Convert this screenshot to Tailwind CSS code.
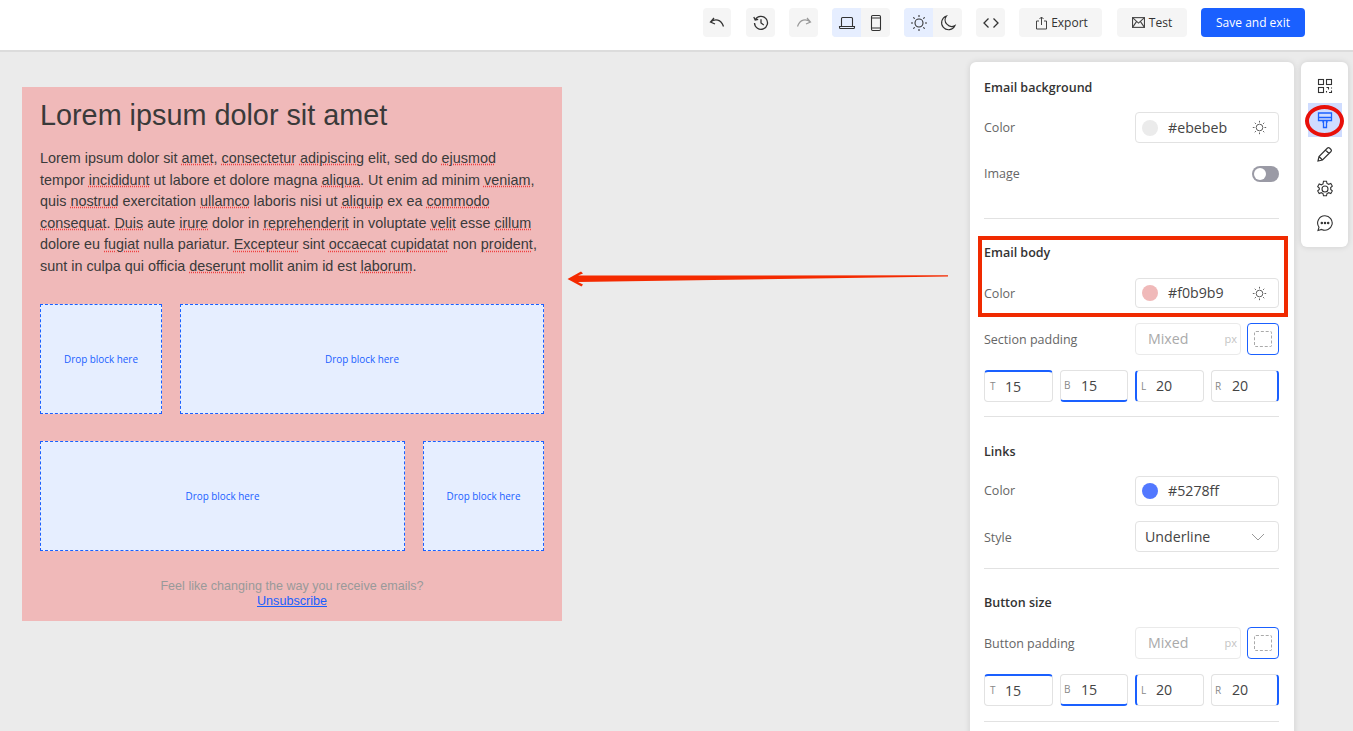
<!DOCTYPE html>
<html lang="en">
<head>
  <meta charset="UTF-8">
  <title>Email editor</title>
  <script src="https://cdn.jsdelivr.net/npm/@tailwindcss/browser@4"></script>
</head>
<body class="h-[731px] overflow-hidden bg-[#ebebeb] font-['Open_Sans',sans-serif] text-[#333]">
  <!-- top bar -->
  <header class="h-[52px] bg-white border-b-2 border-[#dcdcdc] flex items-start justify-end pt-2 pr-[48px]">
    <button class="w-[28px] h-[29px] rounded-[4px] bg-[#f5f5f5] flex items-center justify-center">
      <svg class="w-[18px] h-[18px]" viewBox="0 0 18 18" fill="none" stroke="#333" stroke-width="1.3"><path d="M6 4L2.500 8l4.500 2M2.500 8C7 4.500 13 5 15.500 12.500"/></svg>
    </button>
    <button class="ml-[15px] w-[29px] h-[29px] rounded-[4px] bg-[#f5f5f5] flex items-center justify-center">
      <svg class="w-[18px] h-[18px]" viewBox="0 0 18 18" fill="none" stroke="#333" stroke-width="1.3"><path d="M3.400 5.500A6.500 6.500 0 1 1 2.500 9M1.800 3l1.400 3 3-.7M9 5.200V9l2.800 2"/></svg>
    </button>
    <button class="ml-[14px] w-[29px] h-[29px] rounded-[4px] bg-[#f5f5f5] flex items-center justify-center">
      <svg class="w-[18px] h-[18px]" viewBox="0 0 18 18" fill="none" stroke="#999" stroke-width="1.2"><path d="M12 4l3.500 4-4.500 2M15.500 8C11 4.500 5 5 2.500 12.500"/></svg>
    </button>
    <div class="ml-[14px] flex h-[29px] rounded-[4px] overflow-hidden bg-[#f5f5f5]">
      <button class="w-[29px] bg-[#e6eeff] flex items-center justify-center">
        <svg class="w-[18px] h-[18px]" viewBox="0 0 18 18" fill="none" stroke="#333" stroke-width="1.1"><path d="M3.500 12.500V4.500a1 1 0 0 1 1-1h9a1 1 0 0 1 1 1v8M1.500 12.500h15v1a1 1 0 0 1-1 1h-13a1 1 0 0 1-1-1z"/></svg>
      </button>
      <button class="w-[29px] flex items-center justify-center">
        <svg class="w-[18px] h-[18px]" viewBox="0 0 18 18" fill="none" stroke="#333" stroke-width="1.1"><rect x="4.500" y="1.500" width="9" height="15" rx="1.2"/><path d="M4.500 4h9M4.500 14h9"/></svg>
      </button>
    </div>
    <div class="ml-[14px] flex h-[29px] rounded-[4px] overflow-hidden bg-[#f5f5f5]">
      <button class="w-[29px] bg-[#e6eeff] flex items-center justify-center">
        <svg class="w-[18px] h-[18px]" viewBox="0 0 18 18" fill="none" stroke="#333" stroke-width="1.1"><circle cx="9" cy="9" r="4"/><path d="M9 1v2M9 15v2M1 9h2M15 9h2M3.300 3.300l1.400 1.400M13.300 13.300l1.400 1.400M3.300 14.700l1.400-1.400M13.300 4.700l1.400-1.400"/></svg>
      </button>
      <button class="w-[29px] flex items-center justify-center">
        <svg class="w-[18px] h-[18px]" viewBox="0 0 18 18" fill="none" stroke="#333" stroke-width="1.1"><path d="M7.500 2a7 7 0 1 0 8.500 9.500A6.500 6.500 0 0 1 7.500 2z"/></svg>
      </button>
    </div>
    <button class="ml-[14px] w-[29px] h-[29px] rounded-[4px] bg-[#f5f5f5] flex items-center justify-center">
      <svg class="w-[18px] h-[18px]" viewBox="0 0 18 18" fill="none" stroke="#333" stroke-width="1.3"><path d="M6.500 4.500L2 9l4.500 4.500M11.500 4.500L16 9l-4.500 4.500"/></svg>
    </button>
    <button class="ml-[14px] w-[83px] h-[29px] rounded-[4px] bg-[#f5f5f5] flex items-center justify-center gap-[3px] pl-[2px] text-[12px] font-medium text-[#333]">
      <svg class="w-[13px] h-[14px]" viewBox="0 0 13 14" fill="none" stroke="#444" stroke-width="1"><path d="M4 5H1.500v8h10V5H9M6.500 9V1M4.500 3l2-2 2 2"/></svg>
      Export
    </button>
    <button class="ml-[15px] w-[70px] h-[29px] rounded-[4px] bg-[#f5f5f5] flex items-center justify-center gap-[4px] text-[12px] font-medium text-[#333]">
      <svg class="w-[13px] h-[11px]" viewBox="0 0 12 10" fill="none" stroke="#444" stroke-width="1"><rect x=".5" y=".5" width="11" height="9"/><path d="M.5.500L6 5.500l5.500-5M.5 9.500L4.300 4M11.500 9.500L7.700 4"/></svg>
      Test
    </button>
    <button class="ml-[14px] w-[104px] h-[29px] rounded-[4px] bg-[#1a60ff] text-white text-[12px] font-medium">Save and exit</button>
  </header>

  <main class="relative flex items-start h-[679px] overflow-hidden">
    <!-- email preview -->
    <section class="ml-[22px] mt-[35px] w-[540px] h-[534px] bg-[#f0b9b9] pl-[18px] pr-[18px] pt-[11px] font-['Liberation_Sans',sans-serif] text-[#3a3a3a]">
      <h1 class="text-[28.8px] leading-[34px]">Lorem ipsum dolor sit amet</h1>
      <p class="mt-[16px] text-[14.4px] leading-[21.6px] whitespace-nowrap">
        Lorem ipsum dolor sit <span class="underline decoration-dotted decoration-[#ee4040]">amet</span>, <span class="underline decoration-dotted decoration-[#ee4040]">consectetur</span> <span class="underline decoration-dotted decoration-[#ee4040]">adipiscing</span> elit, sed do <span class="underline decoration-dotted decoration-[#ee4040]">ejusmod</span><br>
        tempor <span class="underline decoration-dotted decoration-[#ee4040]">incididunt</span> ut labore et dolore magna <span class="underline decoration-dotted decoration-[#ee4040]">aliqua</span>. Ut enim ad minim <span class="underline decoration-dotted decoration-[#ee4040]">veniam</span>,<br>
        quis <span class="underline decoration-dotted decoration-[#ee4040]">nostrud</span> exercitation <span class="underline decoration-dotted decoration-[#ee4040]">ullamco</span> laboris nisi ut <span class="underline decoration-dotted decoration-[#ee4040]">aliquip</span> ex ea <span class="underline decoration-dotted decoration-[#ee4040]">commodo</span><br>
        <span class="underline decoration-dotted decoration-[#ee4040]">consequat</span>. <span class="underline decoration-dotted decoration-[#ee4040]">Duis</span> aute <span class="underline decoration-dotted decoration-[#ee4040]">irure</span> dolor in <span class="underline decoration-dotted decoration-[#ee4040]">reprehenderit</span> in voluptate <span class="underline decoration-dotted decoration-[#ee4040]">velit</span> esse <span class="underline decoration-dotted decoration-[#ee4040]">cillum</span><br>
        dolore eu <span class="underline decoration-dotted decoration-[#ee4040]">fugiat</span> nulla pariatur. <span class="underline decoration-dotted decoration-[#ee4040]">Excepteur</span> sint <span class="underline decoration-dotted decoration-[#ee4040]">occaecat</span> <span class="underline decoration-dotted decoration-[#ee4040]">cupidatat</span> non <span class="underline decoration-dotted decoration-[#ee4040]">proident</span>,<br>
        sunt in culpa qui officia <span class="underline decoration-dotted decoration-[#ee4040]">deserunt</span> mollit anim id est <span class="underline decoration-dotted decoration-[#ee4040]">laborum</span>.
      </p>
      <div class="mt-[26px] flex gap-[18px] h-[110px] font-['Open_Sans',sans-serif] text-[9.9px] text-[#1a60ff]">
        <div class="w-[122px] pt-[2px] border border-dashed border-[#1a60ff] bg-[#e6eeff] flex items-center justify-center">Drop block here</div>
        <div class="w-[364px] pt-[2px] border border-dashed border-[#1a60ff] bg-[#e6eeff] flex items-center justify-center">Drop block here</div>
      </div>
      <div class="mt-[27px] flex gap-[18px] h-[110px] font-['Open_Sans',sans-serif] text-[9.9px] text-[#1a60ff]">
        <div class="w-[365px] pt-[2px] border border-dashed border-[#1a60ff] bg-[#e6eeff] flex items-center justify-center">Drop block here</div>
        <div class="w-[121px] pt-[2px] border border-dashed border-[#1a60ff] bg-[#e6eeff] flex items-center justify-center">Drop block here</div>
      </div>
      <div class="mt-[28px] text-center text-[12.6px] leading-[15px] text-[#999]">
        <p>Feel like changing the way you receive emails?</p>
        <a class="text-[#1a60ff] underline">Unsubscribe</a>
      </div>
    </section>

    <!-- settings panel -->
    <aside class="absolute left-[970px] top-[10px] w-[324px] h-[680px] bg-white rounded-t-[6px] shadow-[0_0_6px_rgba(0,0,0,0.12)] pl-[14px] pr-[15px] pt-[17px] text-[12.5px] text-[#666]">
      <h2 class="font-semibold text-[#333] leading-[17px]">Email background</h2>
      <div class="mt-[16px] flex items-center justify-between">
        <span class="pt-[2px]">Color</span>
        <div class="w-[144px] h-[31px] border border-[#e2e2e2] rounded-[4px] flex items-center pl-[6px] pr-[11px] text-[14.2px] text-[#444]">
          <span class="w-[16px] h-[16px] rounded-full bg-[#ebebeb]"></span>
          <span class="ml-[10px] flex-1">#ebebeb</span>
          <svg class="w-[15px] h-[15px]" viewBox="0 0 18 18" fill="none" stroke="#444" stroke-width="1"><circle cx="9" cy="9" r="4"/><path d="M9 1v2M9 15v2M1 9h2M15 9h2M3.300 3.300l1.400 1.400M13.300 13.300l1.400 1.400M3.300 14.700l1.400-1.400M13.300 4.700l1.400-1.400"/></svg>
        </div>
      </div>
      <div class="mt-[23px] flex items-center justify-between h-[16px]">
        <span>Image</span>
        <span class="w-[27px] h-[16px] rounded-full bg-[#9a9aa5] flex items-center pl-[2px]"><span class="w-[12px] h-[12px] rounded-full bg-white"></span></span>
      </div>
      <hr class="mt-[36px] border-[#e2e2e2]">

      <h2 class="mt-[25px] font-semibold text-[#333] leading-[17px]">Email body</h2>
      <div class="mt-[17px] flex items-center justify-between">
        <span class="pt-[2px]">Color</span>
        <div class="w-[144px] h-[30px] border border-[#e2e2e2] rounded-[4px] flex items-center pl-[6px] pr-[11px] text-[14.2px] text-[#444]">
          <span class="w-[16px] h-[16px] rounded-full bg-[#f0b9b9]"></span>
          <span class="ml-[10px] flex-1">#f0b9b9</span>
          <svg class="w-[15px] h-[15px]" viewBox="0 0 18 18" fill="none" stroke="#444" stroke-width="1"><circle cx="9" cy="9" r="4"/><path d="M9 1v2M9 15v2M1 9h2M15 9h2M3.300 3.300l1.400 1.400M13.300 13.300l1.400 1.400M3.300 14.700l1.400-1.400M13.300 4.700l1.400-1.400"/></svg>
        </div>
      </div>
      <div class="mt-[15px] flex items-center h-[32px]">
        <span class="flex-1 pt-[2px]">Section padding</span>
        <div class="w-[106px] h-[32px] border border-[#eaeaea] rounded-[4px] flex items-center justify-between pl-[12px] pr-[3px] text-[14.2px] text-[#aaa]">Mixed <span class="text-[11px] text-[#c4c4c4]">px</span></div>
        <div class="ml-[6px] w-[32px] h-[32px] border border-[#1a60ff] rounded-[4px] flex items-center justify-center"><span class="w-[18px] h-[16px] border border-dashed border-[#aaa] rounded-[2px]"></span></div>
      </div>
      <div class="mt-[15px] flex justify-between text-[14.2px] text-[#444]">
        <div class="w-[69px] h-[32px] border border-[#e2e2e2] border-t-2 border-t-[#1a60ff] rounded-[4px] flex items-center pl-[5px]"><span class="w-[14px] text-[10px] text-[#888]">T</span><span class="ml-[1px]">15</span></div>
        <div class="w-[68px] h-[32px] border border-[#e2e2e2] border-b-2 border-b-[#1a60ff] rounded-[4px] flex items-center pl-[3px]"><span class="w-[14px] text-[10px] text-[#888]">B</span><span class="ml-[3px]">15</span></div>
        <div class="w-[69px] h-[32px] border border-[#e2e2e2] border-l-2 border-l-[#1a60ff] rounded-[4px] flex items-center pl-[4px]"><span class="w-[14px] text-[10px] text-[#888]">L</span><span class="ml-[1px]">20</span></div>
        <div class="w-[68px] h-[32px] border border-[#e2e2e2] border-r-2 border-r-[#1a60ff] rounded-[4px] flex items-center pl-[3px]"><span class="w-[14px] text-[10px] text-[#888]">R</span><span class="ml-[3px]">20</span></div>
      </div>
      <hr class="mt-[14px] border-[#e2e2e2]">

      <h2 class="mt-[26px] font-semibold text-[#333] leading-[17px]">Links</h2>
      <div class="mt-[16px] flex items-center justify-between">
        <span>Color</span>
        <div class="w-[144px] h-[30px] border border-[#e2e2e2] rounded-[4px] flex items-center pl-[6px] text-[14.2px] text-[#444]">
          <span class="w-[16px] h-[16px] rounded-full bg-[#5278ff]"></span>
          <span class="ml-[10px]">#5278ff</span>
        </div>
      </div>
      <div class="mt-[15px] flex items-center justify-between">
        <span class="pt-[3px]">Style</span>
        <div class="w-[144px] h-[31px] border border-[#e2e2e2] rounded-[4px] flex items-center justify-between pl-[9px] pr-[13px] text-[14.2px] text-[#444]">
          Underline
          <svg class="w-[14px] h-[8px]" viewBox="0 0 14 8" fill="none" stroke="#999" stroke-width="1"><path d="M1 1l6 6 6-6"/></svg>
        </div>
      </div>
      <hr class="mt-[16px] border-[#e2e2e2]">

      <h2 class="mt-[25px] font-semibold text-[#333] leading-[17px]">Button size</h2>
      <div class="mt-[16px] flex items-center h-[32px]">
        <span class="flex-1 pt-[2px]">Button padding</span>
        <div class="w-[106px] h-[32px] border border-[#eaeaea] rounded-[4px] flex items-center justify-between pl-[12px] pr-[3px] text-[14.2px] text-[#aaa]">Mixed <span class="text-[11px] text-[#c4c4c4]">px</span></div>
        <div class="ml-[6px] w-[32px] h-[32px] border border-[#1a60ff] rounded-[4px] flex items-center justify-center"><span class="w-[18px] h-[16px] border border-dashed border-[#aaa] rounded-[2px]"></span></div>
      </div>
      <div class="mt-[15px] flex justify-between text-[14.2px] text-[#444]">
        <div class="w-[69px] h-[32px] border border-[#e2e2e2] border-t-2 border-t-[#1a60ff] rounded-[4px] flex items-center pl-[5px]"><span class="w-[14px] text-[10px] text-[#888]">T</span><span class="ml-[1px]">15</span></div>
        <div class="w-[68px] h-[32px] border border-[#e2e2e2] border-b-2 border-b-[#1a60ff] rounded-[4px] flex items-center pl-[3px]"><span class="w-[14px] text-[10px] text-[#888]">B</span><span class="ml-[3px]">15</span></div>
        <div class="w-[69px] h-[32px] border border-[#e2e2e2] border-l-2 border-l-[#1a60ff] rounded-[4px] flex items-center pl-[4px]"><span class="w-[14px] text-[10px] text-[#888]">L</span><span class="ml-[1px]">20</span></div>
        <div class="w-[68px] h-[32px] border border-[#e2e2e2] border-r-2 border-r-[#1a60ff] rounded-[4px] flex items-center pl-[3px]"><span class="w-[14px] text-[10px] text-[#888]">R</span><span class="ml-[3px]">20</span></div>
      </div>
      <hr class="mt-[15px] border-[#e2e2e2]">
    </aside>

    <!-- icon rail -->
    <nav class="absolute left-[1301px] top-[10px] w-[47px] h-[185px] bg-white rounded-[6px] shadow-[0_0_6px_rgba(0,0,0,0.12)] flex flex-col items-center pt-[7px]">
      <span class="w-[34px] h-[34px] flex items-center justify-center">
        <svg class="w-[16px] h-[16px]" viewBox="0 0 16 16" fill="none" stroke="#333" stroke-width="1.100"><rect x="1.500" y="1.500" width="5" height="5"/><rect x="9.500" y="1.500" width="5" height="5"/><rect x="1.500" y="9.500" width="5" height="5"/><path d="M9.500 9.500h2v2M14.500 9.500v1M9.500 13v1.500M12 14.500h2.500v-2"/></svg>
      </span>
      <span class="w-[34px] h-[34px] bg-[#cfdcff] flex items-center justify-center">
        <svg class="w-[18px] h-[18px]" viewBox="0 0 18 18" fill="none" stroke="#1a60ff" stroke-width="1.300"><path d="M2.500 2h13v7.500h-13zM2.500 6.500h13M7 9.500v1.500h0.500v5.500h3V11h.5V9.500"/></svg>
      </span>
      <span class="w-[34px] h-[34px] flex items-center justify-center">
        <svg class="w-[18px] h-[18px]" viewBox="0 0 18 18" fill="none" stroke="#333" stroke-width="1.200"><path d="M2 16l1-4.500L11.500 3a1.500 1.500 0 0 1 2 0l1.500 1.500a1.500 1.500 0 0 1 0 2L6.500 15zM3 11.500l3.500 3.500M9.500 5l3.500 3.500"/></svg>
      </span>
      <span class="w-[34px] h-[35px] flex items-center justify-center">
        <svg class="w-[18px] h-[18px]" viewBox="0 0 18 18" fill="none" stroke="#333" stroke-width="1.100"><circle cx="9" cy="9" r="3"/><path d="M7.500 1.200h3l.5 2.200 1.700.9 2.100-.8 1.500 2.600-1.600 1.500v1.800l1.600 1.500-1.500 2.600-2.100-.8-1.700.9-.5 2.200h-3l-.5-2.200-1.700-.9-2.100.8-1.500-2.600 1.600-1.500V8.100L1.700 6.600l1.500-2.600 2.100.8 1.700-.9z"/></svg>
      </span>
      <span class="w-[34px] h-[34px] flex items-center justify-center">
        <svg class="w-[18px] h-[18px]" viewBox="0 0 18 18" fill="none" stroke="#333" stroke-width="1.100"><path d="M9 1.800a7.200 7.200 0 1 1-3.300 13.600L2 16.500l1-3.300A7.200 7.200 0 0 1 9 1.800z"/><circle cx="5.800" cy="9" r=".7" fill="#333"/><circle cx="9" cy="9" r=".7" fill="#333"/><circle cx="12.200" cy="9" r=".7" fill="#333"/></svg>
      </span>
    </nav>

    <!-- annotations laid over the screenshot -->
    <div class="absolute left-[978px] top-[184px] w-[310px] h-[81px] border-4 border-[#f02a00]"></div>
    <div class="absolute left-[1305px] top-[53px] w-[39px] h-[32px] rounded-[50%] border-4 border-[#e8100a]"></div>
    <svg class="absolute left-[560px] top-[209px]" width="400" height="40" viewBox="0 0 400 40"><path d="M7.500 18L21 10.500l2 2-5 2 370-.2v1.200L18 21l5 2.500-1.500 2z" fill="#f42a00"/></svg>
  </main>
</body>
</html>
